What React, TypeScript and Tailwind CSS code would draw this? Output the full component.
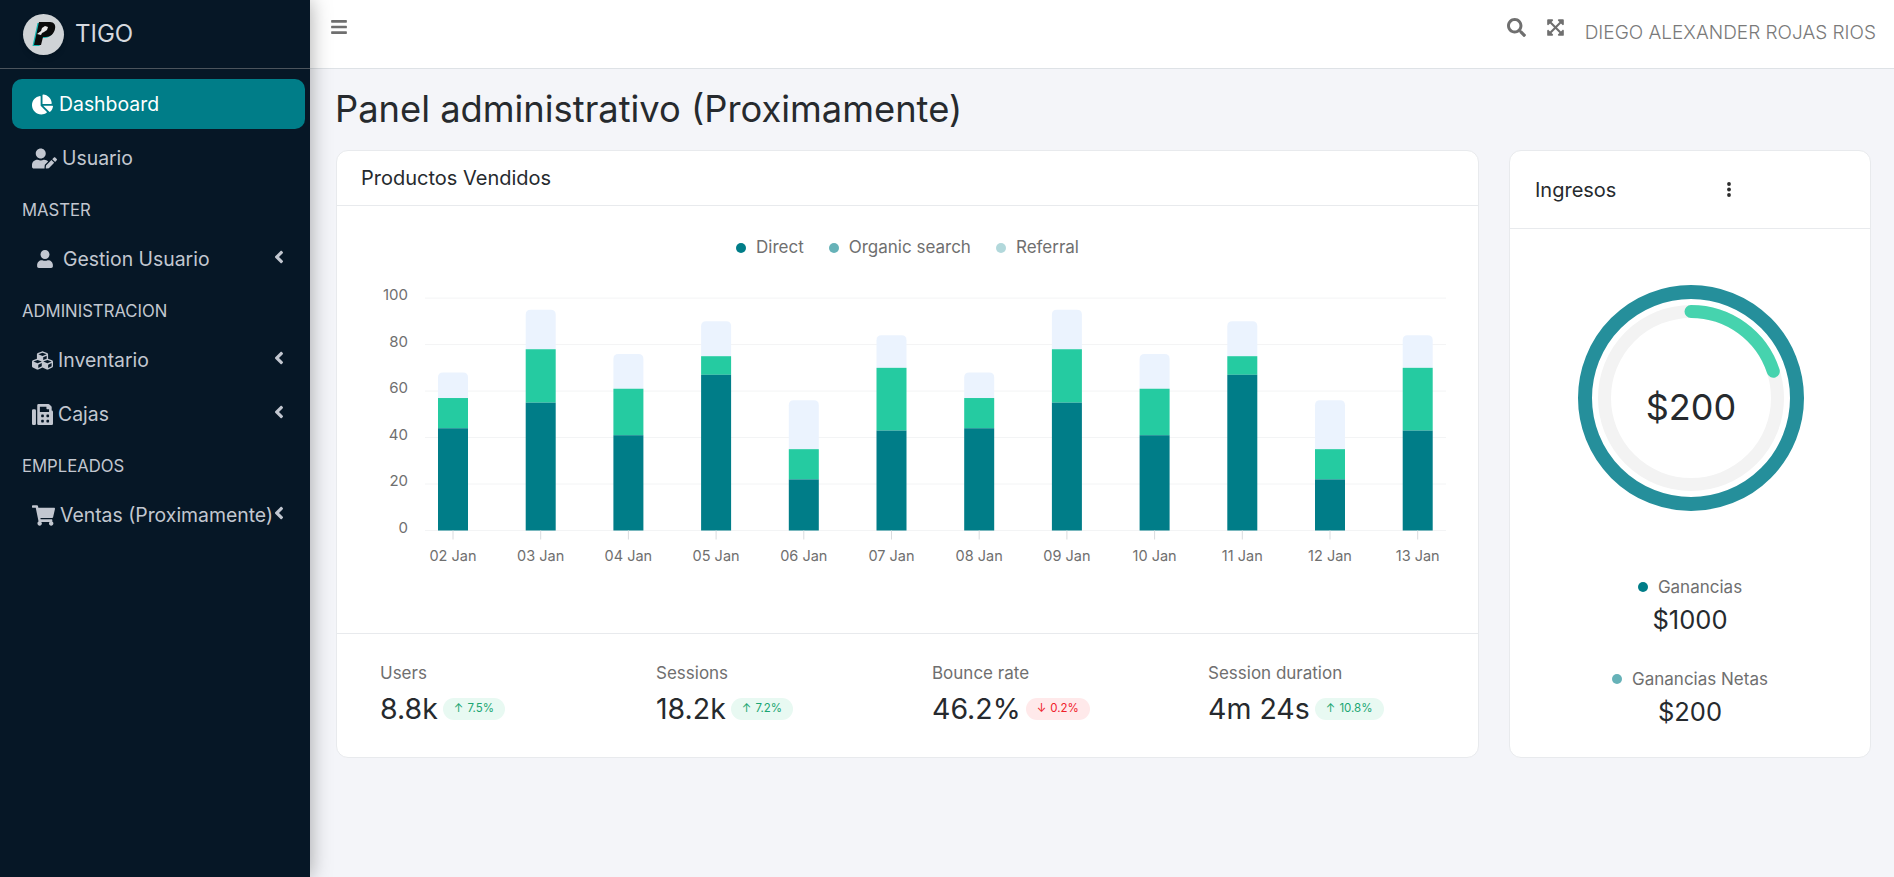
import React from 'react';
import { FaAngleLeft, FaBars, FaChartPie, FaCubes, FaExpandArrowsAlt, FaFax, FaSearch, FaShoppingCart, FaUser, FaUserEdit } from 'react-icons/fa';

const bars = [
  [44, 13, 11], [55, 23, 17], [41, 20, 15], [67, 8, 15], [22, 13, 21], [43, 27, 14],
  [44, 13, 11], [55, 23, 17], [41, 20, 15], [67, 8, 15], [22, 13, 21], [43, 27, 14],
];
const days = ['02 Jan', '03 Jan', '04 Jan', '05 Jan', '06 Jan', '07 Jan', '08 Jan', '09 Jan', '10 Jan', '11 Jan', '12 Jan', '13 Jan'];
const stats = [
  { label: 'Users', value: '8.8k', delta: '7.5%', up: true },
  { label: 'Sessions', value: '18.2k', delta: '7.2%', up: true },
  { label: 'Bounce rate', value: '46.2%', delta: '0.2%', up: false },
  { label: 'Session duration', value: '4m 24s', delta: '10.8%', up: true },
];

const Logo = () => (
  <div className="w-[41px] h-[41px] rounded-full bg-[#cfd3d6] flex items-center justify-center shadow-md">
    <svg width="26" height="28" viewBox="0 0 26 28">
      <path d="M8 2h11c4 0 6 3 5 7-1 5-5 8-9 8h-3l-2 8H3z" fill="#12b5b0" transform="translate(-1.5 1)" />
      <path d="M8 2h11c4 0 6 3 5 7-1 5-5 8-9 8h-3l-2 8H3z" fill="#0b0b0b" />
      <path d="M6 14l4-3 1-3 3-2 3 1-1 3-3 2-2 1-1 2z" fill="#e8e8e8" />
    </svg>
  </div>
);

const NavItem = ({ icon, label, active, arrow, left }: { icon: React.ReactNode; label: string; active?: boolean; arrow?: boolean; left: string }) => (
  <div className={`relative flex items-center h-[50px] ml-3 mr-[5px] mb-[4px] rounded-[10px] text-[19.4px] ${left} ${active ? 'bg-[#007d88] text-white' : 'text-[#c2c7d0]'}`}>
    {icon}
    <span className="whitespace-nowrap pt-[2px]">{label}</span>
    {arrow && <FaAngleLeft size={20} className="absolute right-[16px] top-[13px] text-[#c2c7d0]" />}
  </div>
);

const Section = ({ children }: { children: React.ReactNode }) => (
  <div className="h-[34px] mt-[10px] mb-[7px] pt-[1px] flex items-center pl-[22px] text-[16.7px] text-[#c2c7d0]">{children}</div>
);

const Sidebar = () => (
  <aside className="relative z-10 w-[310px] shrink-0 h-full bg-[#061726] shadow-[0_0_20px_rgba(0,0,0,0.35)]">
    <div className="h-[69px] flex items-center pl-[23px] gap-[11px] border-b border-[#4b545c]">
      <Logo />
      <span className="text-[24px] text-[#d5d9de]">TIGO</span>
    </div>
    <nav className="pt-[10px]">
      <NavItem active left="pl-[20px]" label="Dashboard" icon={<FaChartPie size={21} className="mr-[6px]" />} />
      <NavItem left="pl-[20px]" label="Usuario" icon={<FaUserEdit size={25} className="mr-[5px]" />} />
      <Section>MASTER</Section>
      <NavItem arrow left="pl-[24px]" label="Gestion Usuario" icon={<FaUser size={18} className="mr-[9px]" />} />
      <Section>ADMINISTRACION</Section>
      <NavItem arrow left="pl-[20px]" label="Inventario" icon={<FaCubes size={21} className="mr-[5px]" />} />
      <NavItem arrow left="pl-[20px]" label="Cajas" icon={<FaFax size={21} className="mr-[5px]" />} />
      <Section>EMPLEADOS</Section>
      <NavItem arrow left="pl-[20px]" label="Ventas (Proximamente)" icon={<FaShoppingCart size={23} className="mr-[5px]" />} />
    </nav>
  </aside>
);

const Header = () => (
  <header className="h-[69px] shrink-0 bg-white border-b border-[#dee2e6] flex items-start text-[#6f6f6f]">
    <FaBars size={18} className="ml-[20px] mt-[18px]" />
    <FaSearch size={19} className="ml-auto mt-[18px]" />
    <FaExpandArrowsAlt size={19} className="ml-[20px] mt-[18px]" />
    <span className="ml-[20px] mr-[18px] mt-[21px] text-[19px] leading-[24px] font-light text-[#7a7a7a] whitespace-nowrap">DIEGO ALEXANDER ROJAS RIOS</span>
  </header>
);

const BarChart = () => {
  const zero = 249.5;
  const unit = 2.324;
  return (
    <svg width="1141" height="308" className="block">
      {[0, 20, 40, 60, 80, 100].map((t) => (
        <g key={t}>
          <line x1="88" x2="1109" y1={zero - t * unit} y2={zero - t * unit} stroke="#f3f4f5" />
          <text x="71" y={zero - t * unit - 2} dominantBaseline="middle" textAnchor="end" fontSize="15" fill="#6f6f6f">{t}</text>
        </g>
      ))}
      {bars.map(([a, b, c], i) => {
        const cx = 116 + i * 87.7;
        const x = cx - 15;
        const top = zero - (a + b + c) * unit;
        const mid = zero - (a + b) * unit;
        return (
          <g key={i}>
            <path d={`M${x} ${mid} V${top + 5} q0 -5 5 -5 H${x + 25} q5 0 5 5 V${mid} Z`} fill="#ebf3fe" />
            <rect x={x} y={mid} width="30" height={b * unit} fill="#25cba1" />
            <rect x={x} y={zero - a * unit} width="30" height={a * unit} fill="#007d88" />
            <line x1={cx} x2={cx} y1={zero} y2={zero + 9} stroke="#d9dcdf" />
            <text x={cx} y="276" dominantBaseline="middle" textAnchor="middle" fontSize="14.5" fill="#6f6f6f">{days[i]}</text>
          </g>
        );
      })}
    </svg>
  );
};

const Stat = ({ label, value, delta, up }: (typeof stats)[number]) => (
  <div>
    <div className="text-[17px] leading-[24px] text-[#6f6f6f]">{label}</div>
    <div className="mt-[6px] flex items-center gap-[5px]">
      <span className="text-[28.5px] leading-[36px] text-[#262a2e]">{value}</span>
      <span className={`h-[22px] px-[11px] rounded-full flex items-center gap-[4px] text-[11.5px] whitespace-nowrap ${up ? 'bg-[#e8f9f2] text-[#1ba672]' : 'bg-[#ffe9ea] text-[#f0212b]'}`}>
        <span>{up ? '↑' : '↓'}</span>
        {delta}
      </span>
    </div>
  </div>
);

const ProductCard = () => (
  <section className="w-[1143px] h-[608px] bg-white border border-[#e8eaed] rounded-[12px] flex flex-col">
    <div className="h-[55px] shrink-0 flex items-center pl-[24px] border-b border-[#e8eaed] text-[20px] text-[#262a2e]">Productos Vendidos</div>
    <div className="h-[427px] shrink-0">
      <div className="h-[75px] pt-[9px] flex items-center justify-center gap-[25px] text-[17px] text-[#6f6f6f]">
        <div className="flex items-center gap-[10px]"><span className="w-[10px] h-[10px] rounded-full bg-[#007d88]" />Direct</div>
        <div className="flex items-center gap-[10px]"><span className="w-[10px] h-[10px] rounded-full bg-[#66b2b8]" />Organic search</div>
        <div className="flex items-center gap-[10px]"><span className="w-[10px] h-[10px] rounded-full bg-[#b2d8db]" />Referral</div>
      </div>
      <BarChart />
    </div>
    <div className="flex-1 border-t border-[#e8eaed] pl-[43px] pt-[27px] grid grid-cols-[repeat(4,276px)] overflow-hidden">
      {stats.map((s) => <Stat key={s.label} {...s} />)}
    </div>
  </section>
);

const Donut = () => (
  <div className="relative w-[226px] h-[226px] ml-[2px]">
    <svg width="226" height="226" viewBox="0 0 226 226" className="block">
      <circle cx="113" cy="113" r="106" fill="none" stroke="#258f9b" strokeWidth="14" />
      <circle cx="113" cy="113" r="86.5" fill="none" stroke="#f3f3f3" strokeWidth="13" />
      <path d="M113 26.5 A86.5 86.5 0 0 1 195.3 86.3" fill="none" stroke="#46d3ae" strokeWidth="13" strokeLinecap="round" />
    </svg>
    <div className="absolute inset-0 pt-[18px] flex items-center justify-center text-[36px] text-[#262a2e]">$200</div>
  </div>
);

const Earning = ({ dot, label, value }: { dot: string; label: string; value: string }) => (
  <div className="flex flex-col items-center">
    <div className="flex items-center gap-[10px] text-[17px] leading-[24px] text-[#6f6f6f]">
      <span className={`w-[10px] h-[10px] rounded-full ${dot}`} />
      {label}
    </div>
    <div className="mt-[5px] text-[25.5px] leading-[32px] text-[#262a2e]">{value}</div>
  </div>
);

const IncomeCard = () => (
  <section className="w-[362px] h-[608px] bg-white border border-[#e8eaed] rounded-[12px] flex flex-col">
    <div className="relative h-[78px] shrink-0 flex items-center pl-[25px] border-b border-[#e8eaed] text-[20px] text-[#262a2e]">
      Ingresos
      <svg width="6" height="15" viewBox="0 0 6 15" className="absolute left-[216px] top-[31px]">
        <circle cx="3" cy="2" r="1.9" fill="#2c2c2c" />
        <circle cx="3" cy="7.5" r="1.9" fill="#2c2c2c" />
        <circle cx="3" cy="13" r="1.9" fill="#2c2c2c" />
      </svg>
    </div>
    <div className="flex flex-col items-center pt-[56px]">
      <Donut />
      <div className="mt-[64px]"><Earning dot="bg-[#007d88]" label="Ganancias" value="$1000" /></div>
      <div className="mt-[31px]"><Earning dot="bg-[#66b2b8]" label="Ganancias Netas" value="$200" /></div>
    </div>
  </section>
);

export default function App() {
  return (
    <div className="flex h-screen overflow-hidden bg-[#f4f5f9] font-['Inter',sans-serif]">
      <Sidebar />
      <main className="flex-1 flex flex-col min-w-0">
        <Header />
        <div className="pl-[26px] pr-[23px]">
          <h1 className="h-[81px] flex items-center text-[36.3px] text-[#262a2e] -ml-[1px]">Panel administrativo (Proximamente)</h1>
          <div className="flex gap-[30px]">
            <ProductCard />
            <IncomeCard />
          </div>
        </div>
      </main>
    </div>
  );
}
